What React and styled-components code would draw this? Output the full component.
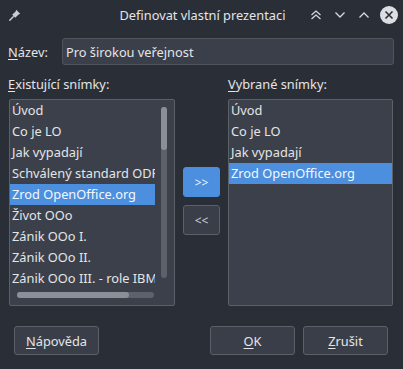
import React from "react"
import styled, { createGlobalStyle } from "styled-components"

const Global = createGlobalStyle`
  html, body {
    margin: 0;
    padding: 0;
    background: #2a2e36;
  }
  * { box-sizing: border-box; }
`

const Dialog = styled.div`
  width: 403px;
  height: 369px;
  background: #2a2e36;
  color: #e3e5e8;
  font-family: "Noto Sans", sans-serif;
  font-size: 12.8px;
  display: flex;
  flex-direction: column;
  overflow: hidden;
`

const TitleBar = styled.div`
  height: 30px;
  display: flex;
  align-items: center;
  padding: 0 4px 0 8px;
  position: relative;
`

const Title = styled.div`
  position: absolute;
  left: 0;
  right: 0;
  text-align: center;
  padding-left: 2px;
  pointer-events: none;
`

const TitleButtons = styled.div`
  margin-left: auto;
  display: flex;
  align-items: center;
  gap: 6px;
`

const IconSlot = styled.div`
  width: ${(p) => p.$w || 18}px;
  height: 18px;
  display: flex;
  align-items: center;
  justify-content: center;
`

const Body = styled.div`
  flex: 1;
  display: flex;
  flex-direction: column;
  padding: 8px 9px 0 8px;
`

const NameRow = styled.div`
  display: flex;
  align-items: center;
  height: 27px;
`

const Label = styled.label`
  display: block;
  line-height: 18px;
  white-space: nowrap;
  u { text-decoration: underline; text-underline-offset: 2px; }
`

const NameLabel = styled(Label)`
  width: 54px;
`

const TextInput = styled.div`
  flex: 1;
  height: 27px;
  background: #3b3f49;
  border: 1px solid #4f545d;
  border-radius: 3px;
  padding: 0 3px;
  display: flex;
  align-items: center;
`

const Columns = styled.div`
  display: grid;
  grid-template-columns: 167px 53px 165px;
  margin-top: 10px;
`

const Column = styled.div`
  display: flex;
  flex-direction: column;
  gap: 6px;
`

const ListBox = styled.div`
  height: 207px;
  margin-left: ${(p) => p.$ml || 0}px;
  background: #3c404a;
  border: 1px solid #5b6069;
  border-radius: 2px;
  display: grid;
  grid-template-columns: ${(p) => (p.$scroll ? "1fr 19px" : "1fr")};
  grid-template-rows: ${(p) => (p.$scroll ? "189px 1fr" : "1fr")};
  overflow: hidden;
`

const Items = styled.div`
  overflow: hidden;
`

const Item = styled.div`
  height: 21px;
  line-height: 21px;
  padding-left: 2px;
  white-space: nowrap;
  overflow: hidden;
  background: ${(p) => (p.$selected ? "#4c8fdf" : "transparent")};
  color: ${(p) => (p.$selected ? "#f4f7fb" : "#e3e5e8")};
`

const VScroll = styled.div`
  padding: 7px 0 11px 6px;
`

const VTrack = styled.div`
  width: 6px;
  height: 100%;
  border-radius: 3px;
  background: #5d616a;
  display: flex;
  flex-direction: column;
`

const HScroll = styled.div`
  padding: 3px 1px 0 7px;
`

const HTrack = styled.div`
  height: 6px;
  border-radius: 3px;
  background: #5d616a;
  display: flex;
`

const Thumb = styled.div`
  border-radius: 3px;
  background: #8b8f97;
`

const Middle = styled.div`
  display: flex;
  flex-direction: column;
  align-items: center;
  padding-top: 92px;
  gap: 8px;
`

const MoveButton = styled.button`
  width: 37px;
  height: 30px;
  border-radius: 3px;
  border: 1px solid ${(p) => (p.$primary ? "#4c8fdf" : "#5b6069")};
  background: ${(p) => (p.$primary ? "#4c8fdf" : "#3a3e48")};
  color: ${(p) => (p.$primary ? "#eef3fb" : "#cfd2d6")};
  font-family: "Noto Sans", sans-serif;
  font-size: 12px;
  padding: 0;
  display: flex;
  align-items: center;
  justify-content: center;
`

const Footer = styled.div`
  display: flex;
  align-items: center;
  padding: 20px 6px 0 6px;
  gap: 8px;
`

const Button = styled.button`
  width: ${(p) => p.$w || 85}px;
  height: 29px;
  margin-left: ${(p) => (p.$push ? "auto" : "0")};
  background: #3a3e48;
  border: 1px solid #5b6069;
  border-radius: 3px;
  color: #e3e5e8;
  font-family: "Noto Sans", sans-serif;
  font-size: 12.8px;
  padding: 0;
  u { text-decoration: underline; text-underline-offset: 2px; }
`

const PinIcon = () => (
  <svg width="14" height="14" viewBox="0 0 14 14">
    <path d="M8.2 1.8 L12.2 5.8 L10.6 6.4 L7.2 9.8 L4.2 6.8 L7.6 3.4 Z" fill="#c9ccd1" />
    <path d="M5.2 8.8 L1.8 12.2" stroke="#c9ccd1" strokeWidth="1.5" strokeLinecap="round" />
  </svg>
)

const Chevron = ({ up, double }) => (
  <svg width="14" height="14" viewBox="0 0 14 14" fill="none" stroke="#d6d8dc" strokeWidth="1.3">
    {double ? (
      <>
        <path d="M2.5 7 L7 3 L11.5 7" />
        <path d="M2.5 11 L7 7 L11.5 11" />
      </>
    ) : up ? (
      <path d="M2.5 9.5 L7 5 L11.5 9.5" />
    ) : (
      <path d="M2.5 4.5 L7 9 L11.5 4.5" />
    )}
  </svg>
)

const CloseIcon = () => (
  <svg width="18" height="18" viewBox="0 0 18 18">
    <circle cx="9" cy="9" r="9" fill="#dcdee2" />
    <path d="M5.5 5.5 L12.5 12.5 M12.5 5.5 L5.5 12.5" stroke="#2a2e36" strokeWidth="1.6" />
  </svg>
)

const existing = [
  "Úvod",
  "Co je LO",
  "Jak vypadají",
  "Schválený standard ODF",
  "Zrod OpenOffice.org",
  "Život OOo",
  "Zánik OOo I.",
  "Zánik OOo II.",
  "Zánik OOo III. - role IBM",
]

const chosen = ["Úvod", "Co je LO", "Jak vypadají", "Zrod OpenOffice.org"]

export default function App() {
  return (
    <Dialog>
      <Global />
      <TitleBar>
        <PinIcon />
        <Title>Definovat vlastní prezentaci</Title>
        <TitleButtons>
          <IconSlot><Chevron double /></IconSlot>
          <IconSlot><Chevron /></IconSlot>
          <IconSlot><Chevron up /></IconSlot>
          <IconSlot $w={20}><CloseIcon /></IconSlot>
        </TitleButtons>
      </TitleBar>
      <Body>
        <NameRow>
          <NameLabel><u>N</u>ázev:</NameLabel>
          <TextInput>Pro širokou veřejnost</TextInput>
        </NameRow>
        <Columns>
          <Column>
            <Label><u>E</u>xistující snímky:</Label>
            <ListBox $scroll $ml={1}>
              <Items>
                {existing.map((t, i) => (
                  <Item key={t} $selected={i === 4}>{t}</Item>
                ))}
              </Items>
              <VScroll>
                <VTrack>
                  <Thumb style={{ height: "25%" }} />
                </VTrack>
              </VScroll>
              <HScroll>
                <HTrack>
                  <Thumb style={{ width: "82%" }} />
                </HTrack>
              </HScroll>
            </ListBox>
          </Column>
          <Middle>
            <MoveButton $primary>&gt;&gt;</MoveButton>
            <MoveButton>&lt;&lt;</MoveButton>
          </Middle>
          <Column>
            <Label><u>V</u>ybrané snímky:</Label>
            <ListBox>
              <Items>
                {chosen.map((t, i) => (
                  <Item key={t} $selected={i === 3}>{t}</Item>
                ))}
              </Items>
            </ListBox>
          </Column>
        </Columns>
        <Footer>
          <Button><u>N</u>ápověda</Button>
          <Button $push><u>O</u>K</Button>
          <Button><u>Z</u>rušit</Button>
        </Footer>
      </Body>
    </Dialog>
  )
}
